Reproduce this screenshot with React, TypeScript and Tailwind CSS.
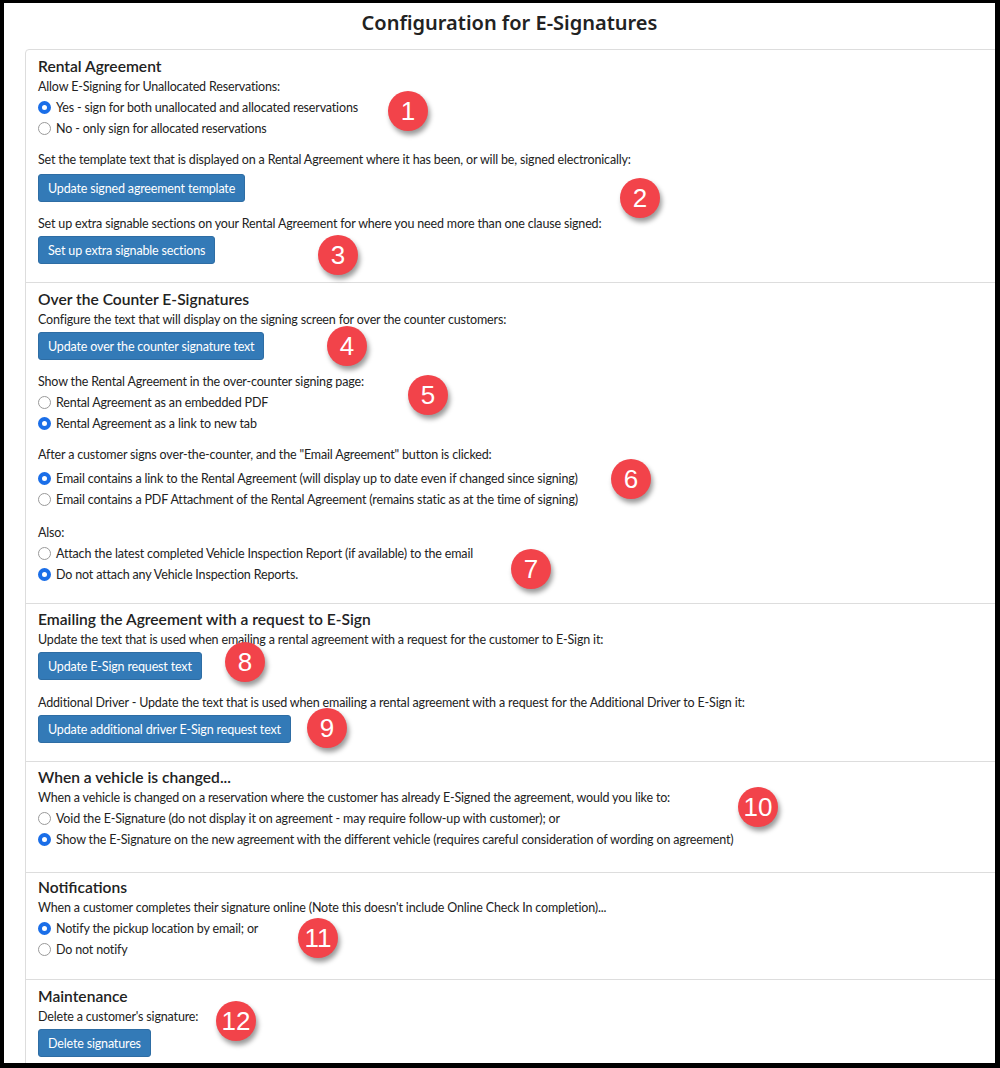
import React from "react";

const font = { fontFamily: 'Lato, "Noto Sans", sans-serif' };

function Radio({ name, label, checked }: { name: string; label: string; checked?: boolean }) {
  return (
    <label className="flex h-[21px] items-center">
      <input
        type="radio"
        name={name}
        defaultChecked={checked}
        className="m-0 mr-[5px] h-[13px] w-[13px] appearance-none rounded-full border border-[#9a9a9a] bg-white checked:border-[4px] checked:border-[#1a6ee8]"
      />
      <span>{label}</span>
    </label>
  );
}

function Btn({ children }: { children: React.ReactNode }) {
  return (
    <button className="h-[28px] rounded-[3px] border border-[#2e6da4] bg-[#337ab7] px-[9px] text-[12.5px] tracking-[-0.16px] text-white">
      {children}
    </button>
  );
}

function Section({
  title,
  className,
  children,
}: {
  title: string;
  className?: string;
  children: React.ReactNode;
}) {
  return (
    <section className={"px-[12px] " + (className ?? "")}>
      <h3 className="text-[15.6px] font-semibold leading-[20px] tracking-normal text-[#222]">{title}</h3>
      {children}
    </section>
  );
}

function Badge({ n, x, y }: { n: number; x: number; y: number }) {
  return (
    <div
      className="absolute flex h-[40px] w-[40px] items-center justify-center rounded-full bg-[#f2434a] text-[26px] leading-none text-white shadow-[2px_4px_5px_rgba(0,0,0,0.4)]"
      style={{ left: x - 20, top: y - 20, fontFamily: '"Liberation Sans", Arial, sans-serif' }}
    >
      {n}
    </div>
  );
}

const badges: [number, number, number][] = [
  [1, 408, 111],
  [2, 640, 198],
  [3, 338, 255],
  [4, 347, 346],
  [5, 428, 395],
  [6, 631, 479],
  [7, 531, 569],
  [8, 245, 662],
  [9, 327, 728],
  [10, 758, 807],
  [11, 318, 938],
  [12, 236, 1021],
];

export default function App() {
  return (
    <div className="relative h-[1068px] w-[1000px] overflow-hidden bg-black" style={font}>
      <div className="absolute inset-0 ml-[4px] mt-[3px] mr-[5px] mb-[5px] overflow-hidden bg-white text-[12.5px] leading-[21px] tracking-[-0.16px] text-[#222]">
        <h1
          className="pl-[20px] pt-[6px] text-center text-[20px] font-semibold leading-[28px] tracking-normal text-[#222]"
          style={{ fontFamily: '"Noto Sans", sans-serif' }}
        >
          Configuration for E-Signatures
        </h1>
        <div className="ml-[21px] mr-[-20px] mt-[12px] divide-y divide-[#ddd] rounded-tl-[4px] border border-[#ddd]">
          <Section title="Rental Agreement" className="pt-[6px] pb-[18px]">
            <p>Allow E-Signing for Unallocated Reservations:</p>
            <Radio name="unalloc" label="Yes - sign for both unallocated and allocated reservations" checked />
            <Radio name="unalloc" label="No - only sign for allocated reservations" />
            <p className="mt-[10px]">
              Set the template text that is displayed on a Rental Agreement where it has been, or will be, signed
              electronically:
            </p>
            <div className="mt-[4px]">
              <Btn>Update signed agreement template</Btn>
            </div>
            <p className="mt-[11px]">
              Set up extra signable sections on your Rental Agreement for where you need more than one clause signed:
            </p>
            <div className="mt-[2px]">
              <Btn>Set up extra signable sections</Btn>
            </div>
          </Section>

          <Section title="Over the Counter E-Signatures" className="pt-[6px] pb-[18px]">
            <p>Configure the text that will display on the signing screen for over the counter customers:</p>
            <div className="mt-[2px]">
              <Btn>Update over the counter signature text</Btn>
            </div>
            <p className="mt-[11px]">Show the Rental Agreement in the over-counter signing page:</p>
            <Radio name="show" label="Rental Agreement as an embedded PDF" />
            <Radio name="show" label="Rental Agreement as a link to new tab" checked />
            <p className="mt-[10px]">
              After a customer signs over-the-counter, and the &quot;Email Agreement&quot; button is clicked:
            </p>
            <div className="mt-[3px]">
              <Radio
                name="emailtype"
                label="Email contains a link to the Rental Agreement (will display up to date even if changed since signing)"
                checked
              />
              <Radio
                name="emailtype"
                label="Email contains a PDF Attachment of the Rental Agreement (remains static as at the time of signing)"
              />
            </div>
            <p className="mt-[12px]">Also:</p>
            <Radio name="vir" label="Attach the latest completed Vehicle Inspection Report (if available) to the email" />
            <Radio name="vir" label="Do not attach any Vehicle Inspection Reports." checked />
          </Section>

          <Section title="Emailing the Agreement with a request to E-Sign" className="pt-[5px] pb-[18px]">
            <p>Update the text that is used when emailing a rental agreement with a request for the customer to E-Sign it:</p>
            <div className="mt-[2px]">
              <Btn>Update E-Sign request text</Btn>
            </div>
            <p className="mt-[12px]">
              Additional Driver - Update the text that is used when emailing a rental agreement with a request for the
              Additional Driver to E-Sign it:
            </p>
            <div className="mt-[2px]">
              <Btn>Update additional driver E-Sign request text</Btn>
            </div>
          </Section>

          <Section title="When a vehicle is changed..." className="pt-[5px] pb-[22px]">
            <p>
              When a vehicle is changed on a reservation where the customer has already E-Signed the agreement, would
              you like to:
            </p>
            <Radio
              name="changed"
              label="Void the E-Signature (do not display it on agreement - may require follow-up with customer); or"
            />
            <Radio
              name="changed"
              label="Show the E-Signature on the new agreement with the different vehicle (requires careful consideration of wording on agreement)"
              checked
            />
          </Section>

          <Section title="Notifications" className="pt-[4px] pb-[19px]">
            <p>When a customer completes their signature online (Note this doesn't include Online Check In completion)...</p>
            <Radio name="notify" label="Notify the pickup location by email; or" checked />
            <Radio name="notify" label="Do not notify" />
          </Section>

          <Section title="Maintenance" className="pt-[6px] pb-[18px]">
            <p>Delete a customer's signature:</p>
            <div className="mt-[2px]">
              <Btn>Delete signatures</Btn>
            </div>
          </Section>
        </div>
      </div>
      {badges.map(([n, x, y]) => (
        <Badge key={n} n={n} x={x} y={y} />
      ))}
    </div>
  );
}
